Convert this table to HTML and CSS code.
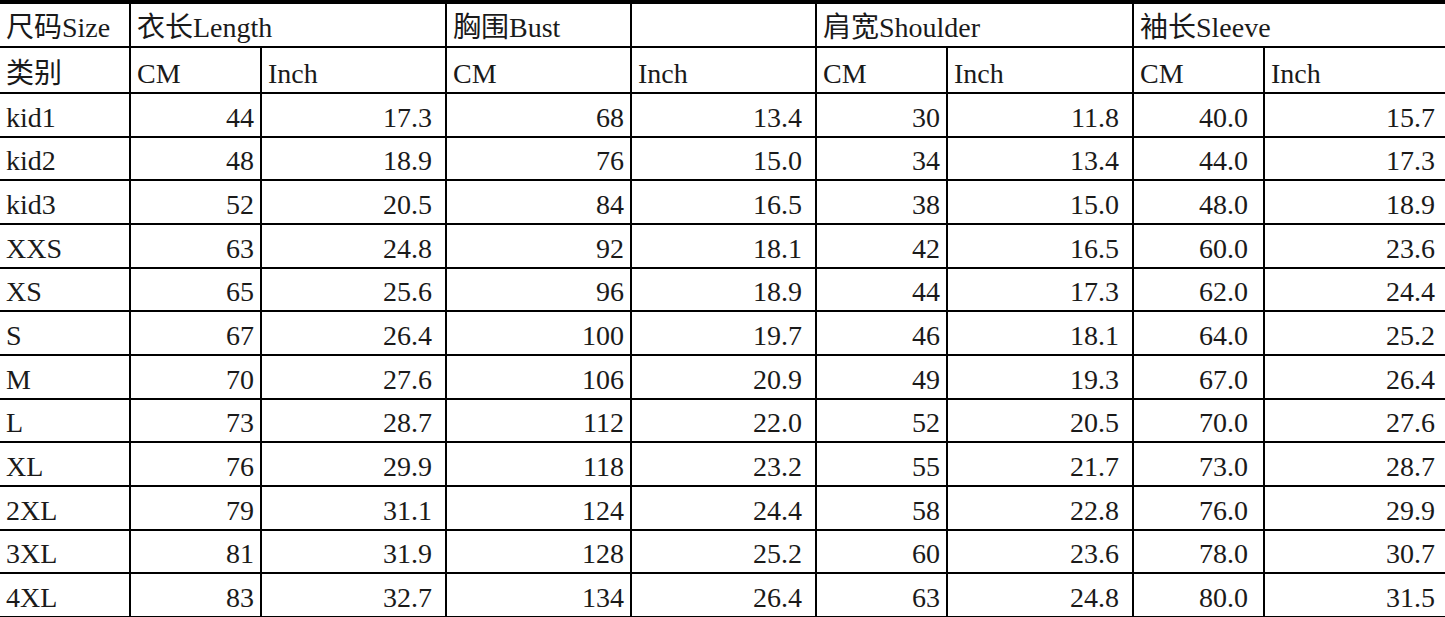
FILE: index.html
```html
<!DOCTYPE html>
<html>
<head>
<meta charset="utf-8">
<link rel="stylesheet" href="styles.css">
</head>
<body>
<table class="size-table">
<colgroup>
<col class="c1"><col class="c2"><col class="c3"><col class="c4"><col class="c5"><col class="c6"><col class="c7"><col class="c8"><col class="c9">
</colgroup>
<tbody>
<tr class="h1"><td>尺码Size</td><td colspan="2">衣长Length</td><td>胸围Bust</td><td></td><td colspan="2">肩宽Shoulder</td><td colspan="2" class="last">袖长Sleeve</td></tr>
<tr class="h2"><td>类别</td><td>CM</td><td>Inch</td><td>CM</td><td>Inch</td><td>CM</td><td>Inch</td><td>CM</td><td class="last">Inch</td></tr>
<tr><td>kid1</td><td class="n">44</td><td class="d">17.3</td><td class="n">68</td><td class="d">13.4</td><td class="n">30</td><td class="d">11.8</td><td class="s">40.0</td><td class="e last">15.7</td></tr>
<tr><td>kid2</td><td class="n">48</td><td class="d">18.9</td><td class="n">76</td><td class="d">15.0</td><td class="n">34</td><td class="d">13.4</td><td class="s">44.0</td><td class="e last">17.3</td></tr>
<tr><td>kid3</td><td class="n">52</td><td class="d">20.5</td><td class="n">84</td><td class="d">16.5</td><td class="n">38</td><td class="d">15.0</td><td class="s">48.0</td><td class="e last">18.9</td></tr>
<tr><td>XXS</td><td class="n">63</td><td class="d">24.8</td><td class="n">92</td><td class="d">18.1</td><td class="n">42</td><td class="d">16.5</td><td class="s">60.0</td><td class="e last">23.6</td></tr>
<tr><td>XS</td><td class="n">65</td><td class="d">25.6</td><td class="n">96</td><td class="d">18.9</td><td class="n">44</td><td class="d">17.3</td><td class="s">62.0</td><td class="e last">24.4</td></tr>
<tr><td>S</td><td class="n">67</td><td class="d">26.4</td><td class="n">100</td><td class="d">19.7</td><td class="n">46</td><td class="d">18.1</td><td class="s">64.0</td><td class="e last">25.2</td></tr>
<tr><td>M</td><td class="n">70</td><td class="d">27.6</td><td class="n">106</td><td class="d">20.9</td><td class="n">49</td><td class="d">19.3</td><td class="s">67.0</td><td class="e last">26.4</td></tr>
<tr><td>L</td><td class="n">73</td><td class="d">28.7</td><td class="n">112</td><td class="d">22.0</td><td class="n">52</td><td class="d">20.5</td><td class="s">70.0</td><td class="e last">27.6</td></tr>
<tr><td>XL</td><td class="n">76</td><td class="d">29.9</td><td class="n">118</td><td class="d">23.2</td><td class="n">55</td><td class="d">21.7</td><td class="s">73.0</td><td class="e last">28.7</td></tr>
<tr><td>2XL</td><td class="n">79</td><td class="d">31.1</td><td class="n">124</td><td class="d">24.4</td><td class="n">58</td><td class="d">22.8</td><td class="s">76.0</td><td class="e last">29.9</td></tr>
<tr><td>3XL</td><td class="n">81</td><td class="d">31.9</td><td class="n">128</td><td class="d">25.2</td><td class="n">60</td><td class="d">23.6</td><td class="s">78.0</td><td class="e last">30.7</td></tr>
<tr><td>4XL</td><td class="n">83</td><td class="d">32.7</td><td class="n">134</td><td class="d">26.4</td><td class="n">63</td><td class="d">24.8</td><td class="s">80.0</td><td class="e last">31.5</td></tr>
</tbody>
</table>
</body>
</html>
```

FILE: styles.css
```css
html, body {
  margin: 0;
  padding: 0;
  background: #ffffff;
  overflow: hidden;
}

.size-table {
  border-collapse: separate;
  border-spacing: 0;
  table-layout: fixed;
  width: 1445px;
  border-top: 4px solid #000;
  font-family: "Liberation Serif", "Noto Sans CJK SC", serif;
  font-size: 28px;
  color: #1a1a1a;
}

.c1 { width: 131px; }
.c2 { width: 131px; }
.c3 { width: 185px; }
.c4 { width: 185px; }
.c5 { width: 185px; }
.c6 { width: 131px; }
.c7 { width: 186px; }
.c8 { width: 131px; }
.c9 { width: 180px; }

.size-table td {
  border-right: 2px solid #000;
  border-bottom: 2px solid #000;
  padding: 0 6px 2px;
  box-sizing: border-box;
  white-space: nowrap;
  overflow: hidden;
  line-height: 32px;
  text-align: left;
  vertical-align: bottom;
}

.size-table td.last {
  border-right: none;
}

.size-table tr { height: 43.67px; }
.size-table tr.h1 { height: 44px; }
.size-table tr.h2 { height: 46px; }

.size-table td.n { text-align: right; padding-right: 6px; }
.size-table td.d { text-align: right; padding-right: 13px; }
.size-table td.s { text-align: right; padding-right: 15px; }
.size-table td.e { text-align: right; padding-right: 10px; }
```
